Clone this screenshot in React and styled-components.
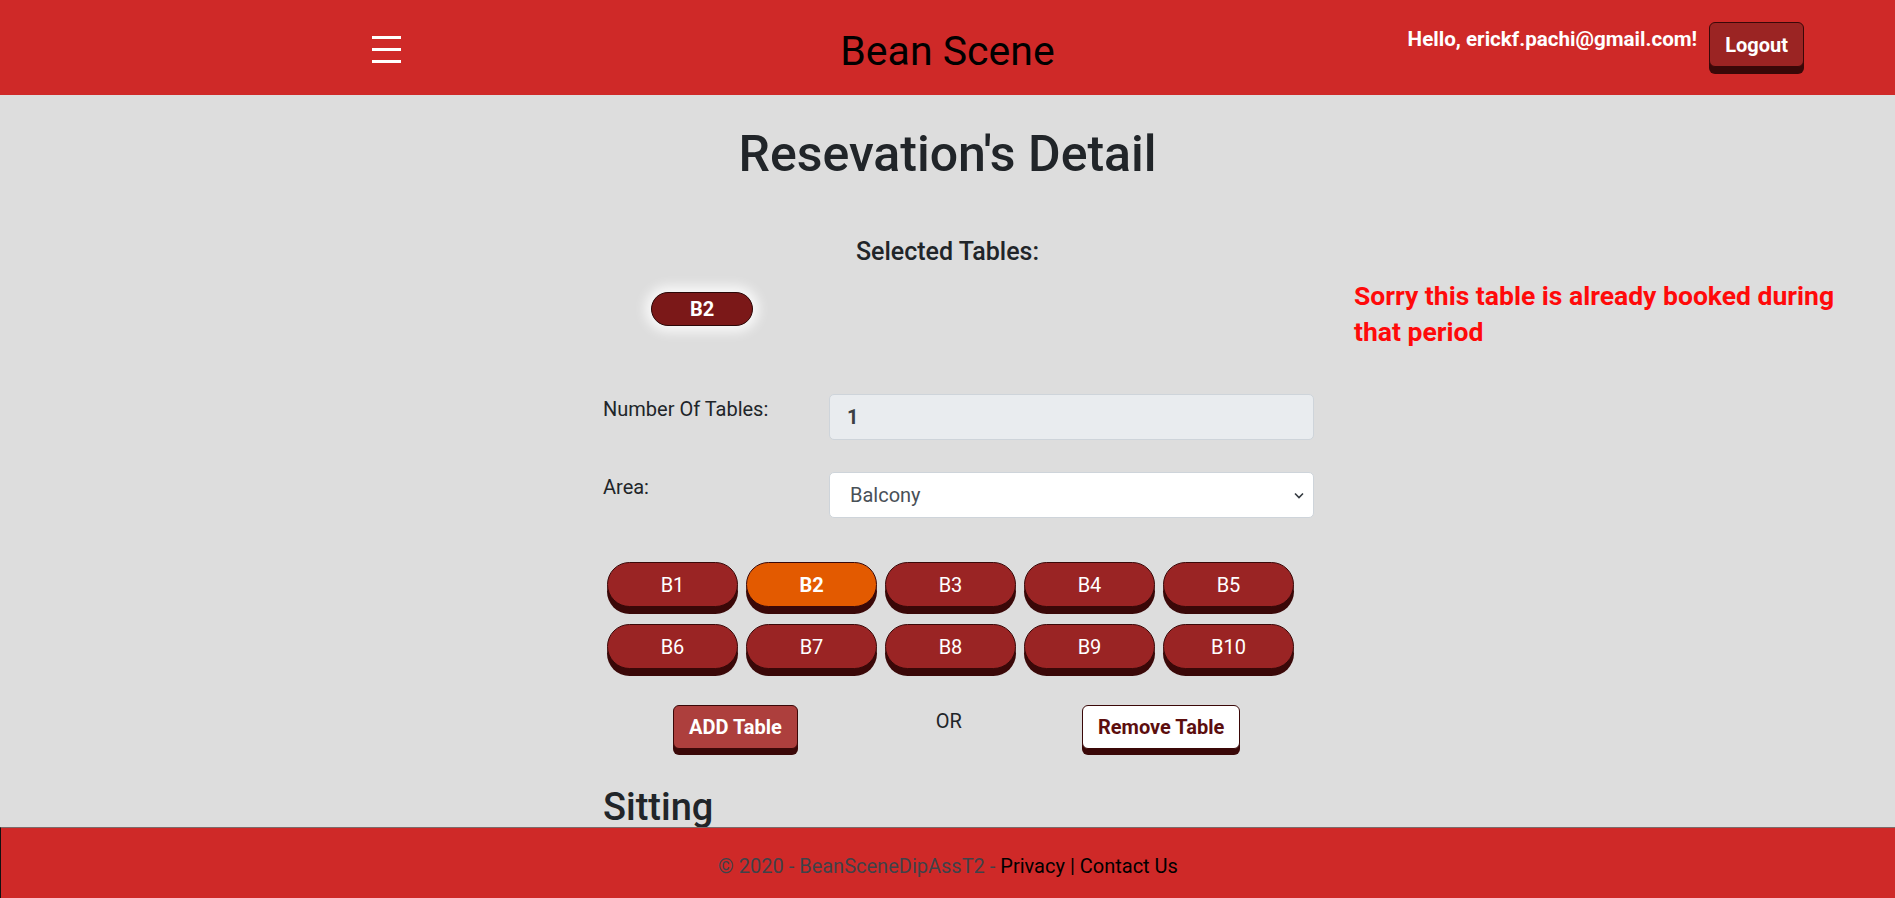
import React from 'react'
import styled, { createGlobalStyle } from 'styled-components'

const GlobalStyle = createGlobalStyle`
  html, body {
    margin: 0;
    padding: 0;
    background: #dddddd;
    font-family: Roboto, "Liberation Sans", sans-serif;
    color: #212529;
    overflow: hidden;
  }
  * { box-sizing: border-box; }
`;

const Header = styled.header`
  height: 95px;
  background: #cf2928;
  display: grid;
  grid-template-columns: 1fr auto 1fr;
`;

const MenuCell = styled.div`
  padding: 34px 0 0 372px;
`;

const Brand = styled.div`
  font-size: 41px;
  line-height: 41px;
  margin-top: 31px;
  color: #000;
`;

const UserCell = styled.div`
  display: flex;
  justify-content: flex-end;
  align-items: flex-start;
  gap: 12px;
  padding: 22px 91px 0 0;
`;

const Greeting = styled.span`
  margin-top: 2px;
  font-size: 20.6px;
  line-height: 30px;
  font-weight: 700;
  color: #fff;
`;

const LogoutButton = styled.button`
  height: 45px;
  padding: 0 15px;
  background: #9b2423;
  border: 1px solid #3a0808;
  border-radius: 6px;
  box-shadow: 0 7px 0 #3a0808;
  color: #fff;
  font: 700 20px Roboto, "Liberation Sans", sans-serif;
`;

const Main = styled.main`
  display: grid;
  grid-template-columns: 603px 711px 1fr;
  align-items: start;
`;

const Title = styled.h1`
  grid-column: 1 / -1;
  margin: 29px 0 0;
  text-align: center;
  font-size: 50px;
  line-height: 60px;
  font-weight: 500;
`;

const SubTitle = styled.h5`
  grid-column: 1 / -1;
  margin: 53px 0 0;
  text-align: center;
  font-size: 25px;
  line-height: 30px;
  font-weight: 500;
`;

const PillSlot = styled.div`
  grid-column: 2;
  grid-row: 3;
  margin-top: 25px;
  padding-left: 48px;
`;

const SelectedPill = styled.div`
  width: 102px;
  height: 34px;
  display: flex;
  align-items: center;
  justify-content: center;
  background: #7b1818;
  border: 1px solid #2b0606;
  border-radius: 999px;
  box-shadow: 0 0 12px 6px rgba(255, 255, 255, 0.8);
  color: #fff;
  font-size: 20px;
  font-weight: 700;
`;

const ErrorText = styled.p`
  grid-column: 3;
  grid-row: 3 / span 4;
  margin: 11px 0 0 40px;
  max-width: 490px;
  color: #ff0a0a;
  font-size: 26.5px;
  line-height: 36px;
  font-weight: 700;
`;

const FormGrid = styled.div`
  grid-column: 2;
  margin-top: 68px;
  display: grid;
  grid-template-columns: 226px 1fr;
  row-gap: 32px;
  align-items: start;
`;

const Label = styled.label`
  font-size: 20px;
  line-height: 30px;
`;

const Field = styled.input`
  height: 46px;
  padding: 0 17px;
  background: #e9ecef;
  border: 1px solid #ced4da;
  border-radius: 5px;
  color: #3b3f44;
  font: 700 20px Roboto, "Liberation Sans", sans-serif;
`;

const SelectWrap = styled.div`
  position: relative;
`;

const Select = styled.select`
  width: 100%;
  height: 46px;
  padding: 0 20px;
  appearance: none;
  background: #fff;
  border: 1px solid #ced4da;
  border-radius: 5px;
  color: #495057;
  font: 400 20px Roboto, "Liberation Sans", sans-serif;
`;

const Chevron = styled.svg`
  position: absolute;
  right: 10px;
  top: 20px;
  pointer-events: none;
`;

const TableGrid = styled.div`
  grid-column: 2;
  margin-top: 44px;
  padding-left: 4px;
  display: grid;
  grid-template-columns: repeat(5, 131px);
  column-gap: 8px;
  row-gap: 17px;
`;

const TableButton = styled.button`
  height: 45px;
  background: ${p => (p.$selected ? '#e35a00' : '#9a2424')};
  border: 1px solid #3a0808;
  border-radius: 999px;
  box-shadow: 0 7px 0 #3a0808;
  color: #fff;
  font: ${p => (p.$selected ? 700 : 400)} 20px Roboto, "Liberation Sans", sans-serif;
`;

const Actions = styled.div`
  grid-column: 2;
  margin-top: 36px;
  padding-left: 70px;
  display: flex;
  align-items: flex-start;
`;

const ActionButton = styled.button`
  height: 44px;
  padding: 0 15px;
  background: ${p => (p.$light ? '#fff' : '#ad3f3d')};
  color: ${p => (p.$light ? '#5c0e0e' : '#fff')};
  border: 1px solid #3a0808;
  border-radius: 6px;
  box-shadow: 0 6px 0 #3a0808;
  font: 700 20px Roboto, "Liberation Sans", sans-serif;
`;

const OrText = styled.span`
  margin: 1px 120px 0 138px;
  font-size: 20px;
  line-height: 30px;
`;

const Sitting = styled.h2`
  grid-column: 2;
  margin: 36px 0 0;
  font-size: 38px;
  line-height: 45px;
  font-weight: 500;
`;

const Footer = styled.footer`
  position: fixed;
  left: 0;
  right: 0;
  bottom: 0;
  height: 71px;
  padding-top: 23px;
  background: #cf2928;
  border-top: 1px solid #7d6a6a;
  border-left: 1px solid #111;
  text-align: center;
  font-size: 20px;
  line-height: 30px;
  color: #3f4249;
`;

const FooterLink = styled.a`
  color: #000;
  text-decoration: none;
`;

const Divider = styled.span`
  color: #000;
`;

const tables = ['B1', 'B2', 'B3', 'B4', 'B5', 'B6', 'B7', 'B8', 'B9', 'B10'];

export default function App() {
  const [selected, setSelected] = React.useState('B2');

  return (
    <>
      <GlobalStyle />
      <Header>
        <MenuCell>
          <svg width="29" height="31" viewBox="0 0 29 31">
            <rect x="0" y="2" width="29" height="3" fill="#fff" />
            <rect x="0" y="14" width="29" height="3" fill="#fff" />
            <rect x="0" y="26" width="29" height="3" fill="#fff" />
          </svg>
        </MenuCell>
        <Brand>Bean Scene</Brand>
        <UserCell>
          <Greeting>Hello, erickf.pachi@gmail.com!</Greeting>
          <LogoutButton>Logout</LogoutButton>
        </UserCell>
      </Header>

      <Main>
        <Title>Resevation's Detail</Title>
        <SubTitle>Selected Tables:</SubTitle>
        <PillSlot>
          <SelectedPill>{selected}</SelectedPill>
        </PillSlot>
        <ErrorText>Sorry this table is already booked during that period</ErrorText>

        <FormGrid>
          <Label>Number Of Tables:</Label>
          <Field value="1" readOnly />
          <Label>Area:</Label>
          <SelectWrap>
            <Select defaultValue="Balcony">
              <option>Main</option>
              <option>Outside</option>
              <option>Balcony</option>
            </Select>
            <Chevron width="10" height="7" viewBox="0 0 10 7">
              <path d="M1 1.5 L5 5.5 L9 1.5" fill="none" stroke="#343a40" strokeWidth="1.6" />
            </Chevron>
          </SelectWrap>
        </FormGrid>

        <TableGrid>
          {tables.map(t => (
            <TableButton key={t} $selected={t === selected} onClick={() => setSelected(t)}>
              {t}
            </TableButton>
          ))}
        </TableGrid>

        <Actions>
          <ActionButton>ADD Table</ActionButton>
          <OrText>OR</OrText>
          <ActionButton $light>Remove Table</ActionButton>
        </Actions>

        <Sitting>Sitting</Sitting>
      </Main>

      <Footer>
        © 2020 - BeanSceneDipAssT2 - <FooterLink href="#">Privacy</FooterLink> <Divider>|</Divider>{' '}
        <FooterLink href="#">Contact Us</FooterLink>
      </Footer>
    </>
  )
}
